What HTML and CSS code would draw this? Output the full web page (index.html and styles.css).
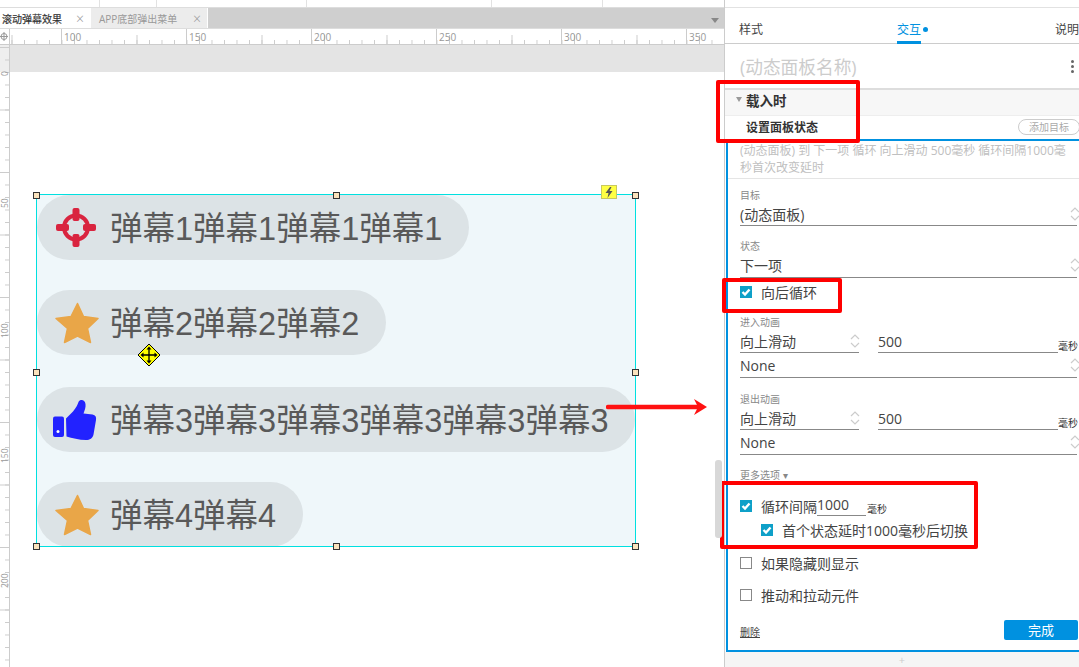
FILE: index.html
```html
<!DOCTYPE html>
<html>

	<head>
		<meta charset="UTF-8">
		<title>滚动弹幕效果</title>
		<link rel="stylesheet" href="styles.css">
	</head>

	<body>
		<svg class="defs" width="0" height="0">
			<symbol id="updown" viewBox="0 0 10 16">
				<path d="M1 6 5 2 9 6M1 10 5 14 9 10" fill="none" stroke="#ccc" stroke-width="1.2" />
			</symbol>
			<symbol id="tick" viewBox="0 0 12 12">
				<path d="M2.5 6 5 8.5 9.5 3.5" fill="none" stroke="#fff" stroke-width="2.4" />
			</symbol>
			<symbol id="star" viewBox="0 0 46 46">
				<path d="M24.5 3.5 30.5 16.500 45 18.500 34.500 28.500 37.500 42.500 24.500 36 11.500 42.500 14.500 28.500 3 18.500 18 16.500Z" fill="#e9a648" stroke="#e9a648" stroke-width="1.500" stroke-linejoin="round" />
			</symbol>
		</svg>

		<div class="app">
			<!-- 左侧画布区 -->
			<div class="editor">
				<div class="topstrip">
					<span class="s1"></span><span class="s2"></span><span class="s3"></span><span class="s4"></span><span class="s5"></span>
				</div>
				<div class="tabs">
					<div class="tab tab-on"><span class="tab-name">滚动弹幕效果</span><span class="tab-x">×</span></div>
					<div class="tab tab-off"><span class="tab-name">APP底部弹出菜单</span><span class="tab-x">×</span></div>
					<div class="tab-rest"><span class="tab-arrow"></span></div>
				</div>
				<div class="hruler">
					<div class="corner">
						<svg width="9" height="9" viewBox="0 0 9 9"><circle cx="4" cy="4.500" r="3" fill="none" stroke="#999" /><path d="M4 0V9M0 4.500H8" stroke="#999" /></svg>
					</div>
					<div class="hruler-marks">
						<span>100</span><span>150</span><span>200</span><span>250</span><span>300</span><span>350</span>
					</div>
				</div>
				<div class="work">
					<div class="vruler">
						<span class="v0">0</span><span>50</span><span>100</span><span>150</span><span>200</span>
					</div>
					<div class="stage">
						<div class="stage-band"></div>
						<div class="canvas">
							<div class="widget">
								<div class="pill">
									<svg class="pill-icon" viewBox="0 0 46 46">
										<circle cx="23" cy="22.500" r="12" fill="none" stroke="#d9243f" stroke-width="4" />
										<rect x="19.500" y="3" width="7" height="13" rx="2" fill="#d9243f" />
										<rect x="19.500" y="29" width="7" height="13" rx="2" fill="#d9243f" />
										<rect x="3" y="19" width="13" height="7" rx="2" fill="#d9243f" />
										<rect x="30" y="19" width="13" height="7" rx="2" fill="#d9243f" />
									</svg>
									<span class="pill-text">弹幕1弹幕1弹幕1弹幕1</span>
								</div>
								<div class="pill">
									<svg class="pill-icon"><use href="#star" /></svg>
									<span class="pill-text">弹幕2弹幕2弹幕2</span>
								</div>
								<div class="pill">
									<svg class="pill-icon" viewBox="0 0 46 46">
										<rect x="0" y="19.500" width="11" height="20.500" rx="2" fill="#2222ff" />
										<circle cx="5" cy="34.500" r="1.500" fill="#fff" />
										<path d="M13 21.500 20 14.500C23 11 25 7 25.500 5 27 2 32 2.500 32.500 7 33 10.500 31.500 13.500 30.500 16.500L39.500 17.500C42.500 18 43.500 20 43 23L40.500 37.500C39.500 41.500 37 43 33 43 26 43 19 41 13.500 39.500Z" fill="#2222ff" />
									</svg>
									<span class="pill-text">弹幕3弹幕3弹幕3弹幕3弹幕3弹幕3</span>
								</div>
								<div class="pill">
									<svg class="pill-icon"><use href="#star" /></svg>
									<span class="pill-text">弹幕4弹幕4</span>
								</div>
								<i class="handle h-tl"></i><i class="handle h-tc"></i><i class="handle h-tr"></i>
								<i class="handle h-ml"></i><i class="handle h-mr"></i>
								<i class="handle h-bl"></i><i class="handle h-bc"></i><i class="handle h-br"></i>
								<div class="bolt">
									<svg width="10" height="11" viewBox="0 0 10 11"><path d="M6 0 1.500 6H4.500L3.500 11 8.500 4H5.500L7.500 0Z" fill="#555" /></svg>
								</div>
							</div>
						</div>
					</div>
				</div>
			</div>

			<!-- 右侧交互面板 -->
			<div class="panel">
				<div class="panel-top">
					<span class="ptab">样式</span>
					<span class="ptab ptab-on">交互</span>
					<span class="ptab ptab-last">说明</span>
				</div>
				<div class="name-row">
					<span>(动态面板名称)</span>
					<span class="dots"><i></i><i></i><i></i></span>
				</div>
				<div class="event"><i class="event-arrow"></i>载入时</div>
				<div class="action">
					<span>设置面板状态</span>
					<span class="add-btn">添加目标</span>
				</div>
				<div class="frame">
					<div class="desc">(动态面板) 到 下一项 循环 向上滑动 500毫秒 循环间隔1000毫秒首次改变延时</div>
					<div class="form">
						<div class="label first">目标</div>
						<div class="select">(动态面板)<svg class="updown"><use href="#updown" /></svg></div>
						<div class="label">状态</div>
						<div class="select sel-none">下一项<svg class="updown"><use href="#updown" /></svg></div>
						<div class="opt opt-a"><i class="check on"><svg><use href="#tick" /></svg></i>向后循环</div>

						<div class="label tight">进入动画</div>
						<div class="duo">
							<div class="select sel-short">向上滑动<svg class="updown"><use href="#updown" /></svg></div>
							<div class="select sel-num">500</div>
							<span class="unit">毫秒</span>
						</div>
						<div class="select sel-none">None<svg class="updown"><use href="#updown" /></svg></div>

						<div class="label mid">退出动画</div>
						<div class="duo">
							<div class="select sel-short">向上滑动<svg class="updown"><use href="#updown" /></svg></div>
							<div class="select sel-num">500</div>
							<span class="unit">毫秒</span>
						</div>
						<div class="select sel-none">None<svg class="updown"><use href="#updown" /></svg></div>

						<div class="label more">更多选项 ▾</div>
						<div class="opt opt-b">
							<i class="check on"><svg><use href="#tick" /></svg></i>循环间隔<span class="inline-num">1000</span><span class="unit">毫秒</span>
						</div>
						<div class="opt opt-sub"><i class="check on"><svg><use href="#tick" /></svg></i>首个状态延时1000毫秒后切换</div>
						<div class="opt opt-c"><i class="check"></i>如果隐藏则显示</div>
						<div class="opt opt-d"><i class="check"></i>推动和拉动元件</div>
						<div class="foot">
							<span class="del">删除</span>
							<span class="done">完成</span>
						</div>
					</div>
				</div>
				<div class="panel-end">+</div>
			</div>

			<!-- 标注 -->
			<div class="mark mark-1"></div>
			<div class="mark mark-2"></div>
			<div class="mark mark-3"></div>
			<svg class="red-arrow" width="104" height="18" viewBox="0 0 104 18">
				<path d="M2 9H92" stroke="#f11" stroke-width="4.500" stroke-linecap="round" />
				<path d="M88 1 101 9 88 17 92 9Z" fill="#f11" />
			</svg>
			<svg class="move" width="24" height="24" viewBox="0 0 24 24">
				<path d="M12 1 23 12 12 23 1 12Z" fill="#ff0" stroke="#000" />
				<path d="M12 6V18M6 12H18" stroke="#000" stroke-width="1.300" />
				<path d="M12 3.500 9.500 6.500H14.500ZM12 20.500 9.500 17.500H14.500ZM3.500 12 6.500 9.500V14.500ZM20.500 12 17.500 9.500V14.500Z" fill="#000" />
			</svg>
			<div class="scrollbar"></div>
		</div>
	</body>

</html>
```

FILE: styles.css
```css
* {
	margin: 0;
	padding: 0;
	box-sizing: border-box;
}

html, body {
	width: 1079px;
	height: 667px;
	overflow: hidden;
	background: #fff;
}

body {
	font-family: "Open Sans", "Noto Sans CJK SC", sans-serif;
	font-size: 14px;
	color: #444;
}

i {
	font-style: normal;
}

.defs {
	position: absolute;
}

.app {
	position: relative;
	display: flex;
	width: 1079px;
	height: 667px;
	overflow: hidden;
}

.editor {
	width: 724px;
	flex: none;
	display: flex;
	flex-direction: column;
}

/* 顶部细条 */
.topstrip {
	height: 8px;
	display: flex;
	border-bottom: 1px solid #ddd;
}

.topstrip span {
	height: 7px;
	border-right: 1px solid #e2e2e2;
}

.s1 { width: 100px; }
.s2 { width: 57px; }
.s3 { width: 150px; }
.s4 { width: 185px; }
.s5 { width: 111px; }

/* 页签 */
.tabs {
	height: 20px;
	display: flex;
	font-size: 10px;
}

.tab {
	display: flex;
	align-items: center;
	justify-content: space-between;
	border-right: 1px solid #fff;
}

.tab-on {
	width: 91px;
	padding: 0 6px 0 2px;
	background: #fff;
	color: #333;
	-webkit-text-stroke: 0.2px #333;
}

.tab-off {
	width: 117px;
	padding: 0 6px 0 8px;
	background: #ececec;
	color: #999;
}

.tab-x {
	font-size: 14px;
	color: #999;
	font-weight: 300;
	-webkit-text-stroke: 0;
}

.tab-rest {
	flex: 1;
	position: relative;
	background: #cfcfcf;
}

.tab-arrow {
	position: absolute;
	right: 5px;
	top: 10px;
	border-left: 4px solid transparent;
	border-right: 4px solid transparent;
	border-top: 5px solid #888;
}

/* 标尺 */
.hruler {
	height: 17px;
	display: flex;
	border-bottom: 1px solid #ccc;
	border-top: 1px solid #ddd;
}

.corner {
	width: 10px;
	flex: none;
	padding-top: 3px;
	border-right: 1px solid #ccc;
	line-height: 0;
}

.hruler-marks {
	flex: 1;
	display: flex;
	padding-left: 51px;
	background:
		linear-gradient(to right, #ccc 1px, transparent 1px) 1.5px bottom / 62.5px 9px repeat-x,
		linear-gradient(to right, #ccc 1px, transparent 1px) 1.5px bottom / 12.5px 4px repeat-x;
}

.hruler-marks span {
	width: 125px;
	flex: none;
	padding-left: 3px;
	font-size: 10px;
	line-height: 16px;
	color: #999;
	background: linear-gradient(to right, #ccc 1px, transparent 1px) left top / 1px 100% no-repeat;
}

.work {
	flex: 1;
	display: flex;
	min-height: 0;
}

.vruler {
	width: 10px;
	flex: none;
	display: flex;
	flex-direction: column;
	padding-top: 153px;
	border-right: 1px solid #ccc;
	background:
		linear-gradient(#ccc 1px, transparent 1px) left 2px / 9px 125px repeat-y,
		linear-gradient(#ccc 1px, transparent 1px) right 2px / 9px 62.500px repeat-y,
		linear-gradient(#ccc 1px, transparent 1px) right 2px / 4px 12.500px repeat-y,
		linear-gradient(#eee 27px, #fff 27px);
}

.vruler span {
	height: 125px;
	flex: none;
	width: 9px;
	font-size: 8.500px;
	line-height: 9px;
	color: #999;
	writing-mode: vertical-rl;
	transform: rotate(180deg);
	text-align: right;
}

.vruler .v0 {
	height: 0;
	margin-top: -122px;
	margin-bottom: 122px;
	overflow: visible;
}

.stage {
	flex: 1;
	display: flex;
	flex-direction: column;
}

.stage-band {
	height: 27px;
	background: #e4e4e4;
}

/* 画布 */
.canvas {
	flex: 1;
	position: relative;
	background: #fff;
}

.widget {
	position: absolute;
	left: 26px;
	top: 122px;
	width: 600px;
	height: 353px;
	padding: 1px;
	display: flex;
	flex-direction: column;
	align-items: flex-start;
	background: #eff7fa;
	font-family: "Liberation Sans", "Noto Sans CJK SC", sans-serif;
}

.widget::after {
	content: "";
	position: absolute;
	left: 0;
	top: 0;
	right: 0;
	bottom: 0;
	border: 1px solid #00e0e0;
}

.pill {
	flex: none;
	display: flex;
	align-items: center;
	gap: 11px;
	height: 65px;
	padding: 0 27px 0 16px;
	border-radius: 33px;
	background: #dce3e6;
	font-size: 32.500px;
	color: #595959;
	white-space: nowrap;
	margin-bottom: 30px;
}

.pill:nth-child(2) {
	margin-bottom: 32px;
}

.pill-text {
	margin-top: -5px;
}

.pill-icon {
	width: 46px;
	height: 46px;
	flex: none;
}

.handle {
	position: absolute;
	z-index: 2;
	width: 7px;
	height: 7px;
	background: #fbe3bd;
	border: 1px solid #333;
}

.h-tl { left: -3px; top: -2px; }
.h-tc { left: 297px; top: -2px; }
.h-tr { right: -3px; top: -2px; }
.h-ml { left: -3px; top: 175px; }
.h-mr { right: -3px; top: 175px; }
.h-bl { left: -3px; bottom: -3px; }
.h-bc { left: 297px; bottom: -3px; }
.h-br { right: -3px; bottom: -3px; }

.bolt {
	position: absolute;
	z-index: 2;
	right: 19px;
	top: -9px;
	width: 16px;
	height: 14px;
	display: flex;
	align-items: center;
	justify-content: center;
	background: #ffff44;
	border: 1px solid #c8c860;
}

/* 面板 */
.panel {
	flex: 1;
	min-width: 0;
	display: flex;
	flex-direction: column;
	border-left: 1px solid #ccc;
	padding-top: 8px;
	background: #fff;
}

.panel > div {
	flex: none;
}

.panel-top {
	height: 37px;
	position: relative;
	display: flex;
	font-size: 12px;
	color: #444;
	border-top: 1px solid #e2e2e2;
	border-bottom: 1px solid #ccc;
	margin-top: -1px;
	padding-left: 14px;
}

.ptab {
	line-height: 43px;
	height: 36px;
	flex: none;
}

.ptab-on {
	position: relative;
	margin-left: 134px;
	color: #0091e0;
	border-bottom: 3px solid #0091e0;
}

.ptab-on::after {
	content: "";
	position: absolute;
	left: 26px;
	top: 19px;
	width: 5px;
	height: 5px;
	border-radius: 50%;
	background: #0091e0;
}

.ptab-last {
	margin-left: 134px;
}

.name-row {
	height: 44px;
	display: flex;
	align-items: center;
	justify-content: space-between;
	padding: 0 5px 0 15px;
	font-size: 17.700px;
	color: #ccc;
}

.dots {
	display: flex;
	flex-direction: column;
	gap: 2px;
}

.dots i {
	width: 3px;
	height: 3px;
	background: #666;
	border-radius: 50%;
}

.event {
	height: 28px;
	display: flex;
	align-items: center;
	padding: 0 0 6px 21px;
	position: relative;
	font-size: 13.500px;
	font-weight: 700;
	color: #333;
	background: #f7f7f7;
	border-top: 2px solid #ddd;
	border-bottom: 1px solid #eee;
}

.event-arrow {
	position: absolute;
	left: 11px;
	top: 7px;
	border-left: 3px solid transparent;
	border-right: 3px solid transparent;
	border-top: 5px solid #999;
}

.action {
	height: 23px;
	display: flex;
	align-items: center;
	justify-content: space-between;
	padding: 0 0 2px 21px;
	font-size: 12px;
	font-weight: 700;
	color: #333;
}

.add-btn {
	width: 62px;
	height: 16px;
	margin-right: -1px;
	border: 1px solid #ccc;
	border-radius: 8px;
	font-size: 10px;
	font-weight: 400;
	line-height: 14px;
	text-align: center;
	color: #aaa;
}

.frame {
	height: 513px;
	margin-right: -4px;
	border: 2px solid #0091e0;
	border-right: 0;
	margin-left: 1px;
}

.desc {
	height: 38px;
	width: 352px;
	padding: 1px 8px 0 12px;
	font-size: 12px;
	line-height: 17px;
	color: #c0c0c0;
	border-bottom: 1px solid #e5e5e5;
}

.form {
	padding-left: 12px;
	width: 351px;
}

.label {
	height: 14px;
	margin-top: 13px;
	font-size: 10px;
	line-height: 14px;
	color: #888;
}

.label.first { margin-top: 9px; }
.label.tight { margin-top: 11px; }
.label.mid { margin-top: 14px; }
.label.more { margin-top: 13px; }

.select {
	height: 24px;
	display: flex;
	align-items: center;
	justify-content: space-between;
	padding-top: 2px;
	font-size: 14px;
	line-height: 22px;
	color: #444;
	border-bottom: 1px solid #888;
	margin-right: 2px;
}

.sel-none {
	height: 25px;
}

.updown {
	width: 10px;
	height: 16px;
	margin: -2px -3px 0 0;
	flex: none;
}

.duo {
	display: flex;
	align-items: flex-start;
	height: 24px;
}

.sel-short {
	width: 119px;
	margin: 0;
}

.sel-short .updown {
	margin-left: auto;
	margin-right: -1px;
}

.sel-num {
	width: 180px;
	margin: 0 0 0 19px;
}

.unit {
	font-size: 10px;
	line-height: 13px;
	color: #333;
	margin-top: 11px;
	white-space: nowrap;
}

.opt {
	height: 24px;
	display: flex;
	align-items: center;
	font-size: 14px;
	color: #444;
	white-space: nowrap;
}

.opt-a { margin-top: 2px; }
.opt-b { margin-top: 12px; }
.opt-sub { padding-left: 21px; }
.opt-c { margin-top: 9px; }
.opt-d { margin-top: 8px; }

.check {
	width: 12px;
	height: 12px;
	flex: none;
	margin-right: 9px;
	border: 1px solid #888;
	line-height: 0;
}

.check.on {
	border: 0;
	background: #0ea0c8;
}

.check svg {
	width: 12px;
	height: 12px;
}

.inline-num {
	width: 49px;
	height: 21px;
	margin-top: -2px;
	line-height: 19px;
	border-bottom: 1px solid #888;
}

.opt-b .unit {
	margin-top: 6px;
	margin-left: 1px;
}

.foot {
	height: 20px;
	margin-top: 13px;
	display: flex;
	align-items: center;
	justify-content: space-between;
	padding-right: 1px;
	font-size: 10px;
	color: #444;
}

.del {
	padding-top: 3px;
	text-decoration: underline;
}

.done {
	width: 74px;
	height: 20px;
	border-radius: 2px;
	background: #0091e0;
	color: #fff;
	font-size: 13px;
	line-height: 20px;
	text-align: center;
}

.panel-end {
	height: 15px;
	background: #f5f5f5;
	text-align: center;
	font-size: 11px;
	line-height: 15px;
	color: #ccc;
}

/* 标注 */
.mark {
	position: absolute;
	border: 4px solid #f00;
	border-radius: 2px;
}

.mark-1 { left: 716px; top: 80px; width: 144px; height: 63px; }
.mark-2 { left: 722px; top: 278px; width: 120px; height: 35px; }
.mark-3 { left: 720px; top: 481px; width: 258px; height: 68px; }

.red-arrow {
	position: absolute;
	left: 606px;
	top: 398px;
}

.move {
	position: absolute;
	left: 137px;
	top: 343px;
}

.scrollbar {
	position: absolute;
	left: 715px;
	top: 460px;
	width: 7px;
	height: 78px;
	border-radius: 3px;
	background: #d8d8d8;
}
```
